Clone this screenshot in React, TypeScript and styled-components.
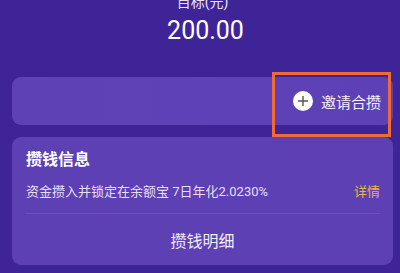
import React from 'react';
import styled, { createGlobalStyle } from 'styled-components';

const GlobalStyle = createGlobalStyle`
  html, body {
    margin: 0;
    padding: 0;
    background: #3f2497;
  }
  body {
    font-family: Roboto, "Noto Sans CJK SC", sans-serif;
    overflow: hidden;
  }
`;

const Page = styled.div`
  width: 400px;
  height: 273px;
  box-sizing: border-box;
  padding: 0 7px 0 12px;
  background: #3f2497;
  display: flex;
  flex-direction: column;
  overflow: hidden;
`;

const Header = styled.div`
  display: flex;
  flex-direction: column;
  align-items: center;
  margin-top: -8px;
  color: #fff;
`;

const Label = styled.div`
  font-size: 14px;
  line-height: 20px;
  color: #e9e3f6;
`;

const Amount = styled.div`
  margin-top: 4px;
  font-size: 25px;
  line-height: 30px;
  font-weight: 400;
  padding-left: 6px;
`;

const Card = styled.div`
  background: #5d40b4;
  border-radius: 9px;
  position: relative;
`;

const InviteCard = styled(Card)`
  margin-top: 31px;
  height: 48px;
  display: flex;
  justify-content: flex-end;
  align-items: center;
  padding-right: 12px;
  background: linear-gradient(90deg, #5e42b5 0%, #5e40b6 100%);
`;

const InviteButton = styled.div`
  display: flex;
  align-items: center;
  gap: 8px;
  color: #f4f0fb;
  font-size: 15px;
`;

const PlusIcon = styled.span`
  width: 20px;
  height: 20px;
  border-radius: 50%;
  background: #fff;
  display: flex;
  align-items: center;
  justify-content: center;
`;

const Highlight = styled.div`
  position: absolute;
  top: -5px;
  right: 2px;
  width: 119px;
  height: 65px;
  box-sizing: border-box;
  border: 3px solid #f06a36;
  pointer-events: none;
`;

const InfoCard = styled(Card)`
  margin-top: 12px;
  height: 128px;
  box-sizing: border-box;
  padding: 12px 13px 0 13px;
  display: flex;
  flex-direction: column;
`;

const Title = styled.div`
  font-size: 16px;
  line-height: 22px;
  font-weight: 700;
  color: #fff;
  padding-left: 1px;
`;

const InfoRow = styled.div`
  margin-top: 12px;
  display: flex;
  justify-content: space-between;
  align-items: center;
  font-size: 13px;
  line-height: 18px;
  color: #e6dff4;
  padding-left: 1px;
`;

const DetailLink = styled.span`
  color: #eab53e;
`;

const Divider = styled.div`
  margin-top: 12px;
  height: 1px;
  background: #6a51be;
`;

const FooterAction = styled.div`
  flex: 1;
  display: flex;
  align-items: center;
  justify-content: center;
  font-size: 16px;
  color: #f1ecfa;
  padding-top: 1px;
`;

export default function App() {
  return (
    <Page>
      <GlobalStyle />
      <Header>
        <Label>目标(元)</Label>
        <Amount>200.00</Amount>
      </Header>
      <InviteCard>
        <InviteButton>
          <PlusIcon>
            <svg width="12" height="12" viewBox="0 0 12 12">
              <path d="M6 1v10M1 6h10" stroke="#555" strokeWidth="1.4" />
            </svg>
          </PlusIcon>
          邀请合攒
        </InviteButton>
        <Highlight />
      </InviteCard>
      <InfoCard>
        <Title>攒钱信息</Title>
        <InfoRow>
          <span>资金攒入并锁定在余额宝 7日年化2.0230%</span>
          <DetailLink>详情</DetailLink>
        </InfoRow>
        <Divider />
        <FooterAction>攒钱明细</FooterAction>
      </InfoCard>
    </Page>
  );
}
